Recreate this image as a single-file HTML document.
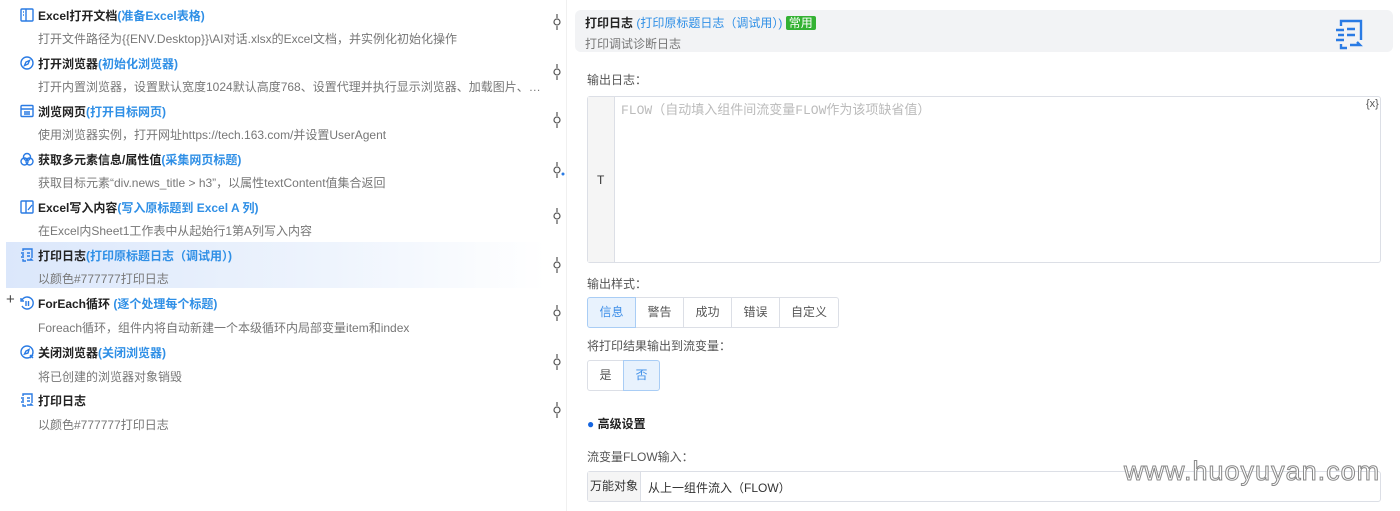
<!DOCTYPE html>
<html><head><meta charset="utf-8"><style>
*{margin:0;padding:0;box-sizing:border-box}
body{width:1400px;height:511px;background:#fff;font-family:"Liberation Sans","Noto Sans CJK SC",sans-serif;position:relative;overflow:hidden;color:#333}
.a{position:absolute;white-space:nowrap}
.t{font-size:12px;font-weight:bold;color:#222;left:38px}
.t span{color:#2f8fe6;font-weight:bold}
.d{font-size:12px;color:#777;left:38px}
.ic{position:absolute;left:20px;width:14px;height:14px}
.hl{position:absolute;left:6px;top:242px;width:540px;height:46px;background:linear-gradient(90deg,#dbe7fb,#eef4fd 60%,#fff)}
.con{position:absolute;left:553px;width:8px;height:16px}
.lbl{font-size:12px;color:#555;left:587px}
.btn{position:absolute;height:31px;border:1px solid #dcdfe6;font-size:12px;color:#555;text-align:center;line-height:29px;background:#fff}
.on{background:#e8f2fd;color:#3d8ee8;border-color:#a9cdf5;z-index:2}
</style></head><body>
<div class="hl"></div>

<svg class="ic" style="top:8px" viewBox="0 0 14 14" fill="none" stroke="#2a7be4" stroke-width="1.4"><rect x="1" y="1" width="12" height="12" rx="1"/><path d="M6 1v12M3 4h1M3 7h1"/></svg>
<div class="a t" style="top:7px">Excel打开文档<span>(准备Excel表格)</span></div>
<div class="a d" style="top:30px">打开文件路径为{{ENV.Desktop}}\AI对话.xlsx的Excel文档，并实例化初始化操作</div>

<svg class="ic" style="top:56px" viewBox="0 0 14 14" fill="none" stroke="#2a7be4" stroke-width="1.4"><circle cx="7" cy="7" r="6"/><path d="M9.5 4.5L6 6 4.5 9.5 8 8z"/></svg>
<div class="a t" style="top:55px">打开浏览器<span>(初始化浏览器)</span></div>
<div class="a d" style="top:78px">打开内置浏览器，设置默认宽度1024默认高度768、设置代理并执行显示浏览器、加载图片、…</div>

<svg class="ic" style="top:104px" viewBox="0 0 14 14" fill="none" stroke="#2a7be4" stroke-width="1.4"><rect x="1" y="1.5" width="12" height="11" rx="1"/><path d="M1 5h12M4 8h6M4 10h6"/></svg>
<div class="a t" style="top:103px">浏览网页<span>(打开目标网页)</span></div>
<div class="a d" style="top:126px">使用浏览器实例，打开网址https://tech.163.com/并设置UserAgent</div>

<svg class="ic" style="top:152px" viewBox="0 0 14 14" fill="none" stroke="#2a7be4" stroke-width="1.4"><circle cx="7" cy="5" r="3.5"/><circle cx="4.5" cy="9.5" r="3.5"/><circle cx="9.5" cy="9.5" r="3.5"/></svg>
<div class="a t" style="top:151px">获取多元素信息/属性值<span>(采集网页标题)</span></div>
<div class="a d" style="top:174px">获取目标元素“div.news_title &gt; h3”，以属性textContent值集合返回</div>

<svg class="ic" style="top:200px" viewBox="0 0 14 14" fill="none" stroke="#2a7be4" stroke-width="1.4"><rect x="1" y="1" width="12" height="12" rx="1"/><path d="M6 1v12M8 10l4-5"/></svg>
<div class="a t" style="top:199px">Excel写入内容<span>(写入原标题到 Excel A 列)</span></div>
<div class="a d" style="top:222px">在Excel内Sheet1工作表中从起始行1第A列写入内容</div>

<svg class="ic" style="top:248px" viewBox="0 0 14 14" fill="none" stroke="#2a7be4" stroke-width="1.4"><path d="M3 3V1h9v9M1 5h3M2 7h2M1 9h3M3 11v2h3M7 5h3M7 8h3M7 12h5l-1.5-1.5"/></svg>
<div class="a t" style="top:247px">打印日志<span>(打印原标题日志（调试用）)</span></div>
<div class="a d" style="top:270px">以颜色#777777打印日志</div>

<div class="a" style="left:6px;top:291px;font-size:15px;color:#444">+</div>
<svg class="ic" style="top:296px" viewBox="0 0 14 14" fill="none" stroke="#2a7be4" stroke-width="1.4"><path d="M2 4A6 6 0 1 1 2 10M1 2v3h3"/><path d="M6 5v5M8.5 5v5"/></svg>
<div class="a t" style="top:295px">ForEach循环<span> (逐个处理每个标题)</span></div>
<div class="a d" style="top:319px">Foreach循环，组件内将自动新建一个本级循环内局部变量item和index</div>

<svg class="ic" style="top:345px" viewBox="0 0 14 14" fill="none" stroke="#2a7be4" stroke-width="1.4"><circle cx="7" cy="7" r="6"/><path d="M9 4.5L6 6 4.5 9 8 8z"/><path d="M10 10l3 3M13 10l-3 3"/></svg>
<div class="a t" style="top:344px">关闭浏览器<span>(关闭浏览器)</span></div>
<div class="a d" style="top:368px">将已创建的浏览器对象销毁</div>

<svg class="ic" style="top:393px" viewBox="0 0 14 14" fill="none" stroke="#2a7be4" stroke-width="1.4"><path d="M3 3V1h9v9M1 5h3M2 7h2M1 9h3M3 11v2h3M7 5h3M7 8h3M7 12h5l-1.5-1.5"/></svg>
<div class="a t" style="top:392px">打印日志</div>
<div class="a d" style="top:416px">以颜色#777777打印日志</div>

<!-- connectors -->
<svg width="0" height="0" style="position:absolute"><defs><g id="cn"><path d="M4 0v4M4 12v4" stroke="#555" stroke-width="1.2"/><circle cx="4" cy="8" r="3" fill="#fff" stroke="#555" stroke-width="1.2"/></g></defs></svg>
<svg class="con" style="top:14px"><use href="#cn"/></svg>
<svg class="con" style="top:64px"><use href="#cn"/></svg>
<svg class="con" style="top:112px"><use href="#cn"/></svg>
<svg class="con" style="top:162px;width:12px"><use href="#cn"/><circle cx="10" cy="12" r="1.5" fill="#2a7be4"/></svg>
<svg class="con" style="top:208px"><use href="#cn"/></svg>
<svg class="con" style="top:257px"><use href="#cn"/></svg>
<svg class="con" style="top:305px"><use href="#cn"/></svg>
<svg class="con" style="top:354px"><use href="#cn"/></svg>
<svg class="con" style="top:402px"><use href="#cn"/></svg>
<div class="a" style="left:566px;top:0;width:1px;height:511px;background:#f0f0f0"></div>

<!-- right panel -->
<div class="a" style="left:575px;top:10px;width:818px;height:42px;background:#f2f3f5;border-radius:6px"></div>
<div class="a" style="left:585px;top:14px;font-size:12px;font-weight:bold;color:#222">打印日志 <span style="color:#2f8fe6;font-weight:normal">(打印原标题日志（调试用）)</span> <span style="background:#34b233;color:#fff;font-weight:normal;padding:0 3px;border-radius:2px">常用</span></div>
<div class="a" style="left:585px;top:35px;font-size:12px;color:#777">打印调试诊断日志</div>
<svg class="a" style="left:1333px;top:18px" width="32" height="32" viewBox="0 0 32 32" fill="none" stroke="#2a7be4" stroke-width="2.4"><path d="M8 8V3h20v19M3 12h8M5 17h6M3 22h8M8 26v4h6M14 11h8M14 17h8M17 27h10l-3-3M17 27l0 0"/></svg>

<div class="a lbl" style="top:71px">输出日志：</div>
<div class="a" style="left:587px;top:96px;width:794px;height:167px;border:1px solid #dcdfe6;border-radius:3px"></div>
<div class="a" style="left:588px;top:97px;width:27px;height:165px;background:#f5f5f5;border-right:1px solid #dcdfe6"></div>
<div class="a" style="left:597px;top:173px;font-size:12px;color:#333">T</div>
<div class="a" style="left:621px;top:99px;font-size:13px;color:#bbb;font-family:'Liberation Mono','Noto Sans CJK SC',monospace">FLOW（自动填入组件间流变量FLOW作为该项缺省值）</div>
<div class="a" style="left:1366px;top:98px;font-size:11px;color:#555">{x}</div>

<div class="a lbl" style="top:275px">输出样式：</div>
<div class="btn on" style="left:587px;top:297px;width:49px;border-radius:3px 0 0 3px">信息</div>
<div class="btn" style="left:635px;top:297px;width:49px">警告</div>
<div class="btn" style="left:683px;top:297px;width:49px">成功</div>
<div class="btn" style="left:731px;top:297px;width:49px">错误</div>
<div class="btn" style="left:779px;top:297px;width:60px;border-radius:0 3px 3px 0">自定义</div>

<div class="a lbl" style="top:337px">将打印结果输出到流变量：</div>
<div class="btn" style="left:587px;top:360px;width:37px;border-radius:3px 0 0 3px">是</div>
<div class="btn on" style="left:623px;top:360px;width:37px;border-radius:0 3px 3px 0">否</div>

<div class="a" style="left:587px;top:415px;font-size:12px;font-weight:bold;color:#222"><span style="color:#1565e0">●</span> 高级设置</div>
<div class="a lbl" style="top:448px">流变量FLOW输入：</div>
<div class="a" style="left:587px;top:471px;width:794px;height:31px;border:1px solid #dcdfe6;border-radius:3px"></div>
<div class="a" style="left:588px;top:472px;width:53px;height:29px;background:#f5f5f5;border-right:1px solid #dcdfe6;font-size:12px;color:#333;text-align:center;line-height:29px">万能对象</div>
<div class="a" style="left:648px;top:479px;font-size:12px;color:#333">从上一组件流入（FLOW）</div>
<div class="a" style="left:1124px;top:456px;font-size:27px;color:#fff;-webkit-text-stroke:1px #888;letter-spacing:1px;font-family:'Liberation Sans',sans-serif">www.huoyuyan.com</div>
</body></html>
